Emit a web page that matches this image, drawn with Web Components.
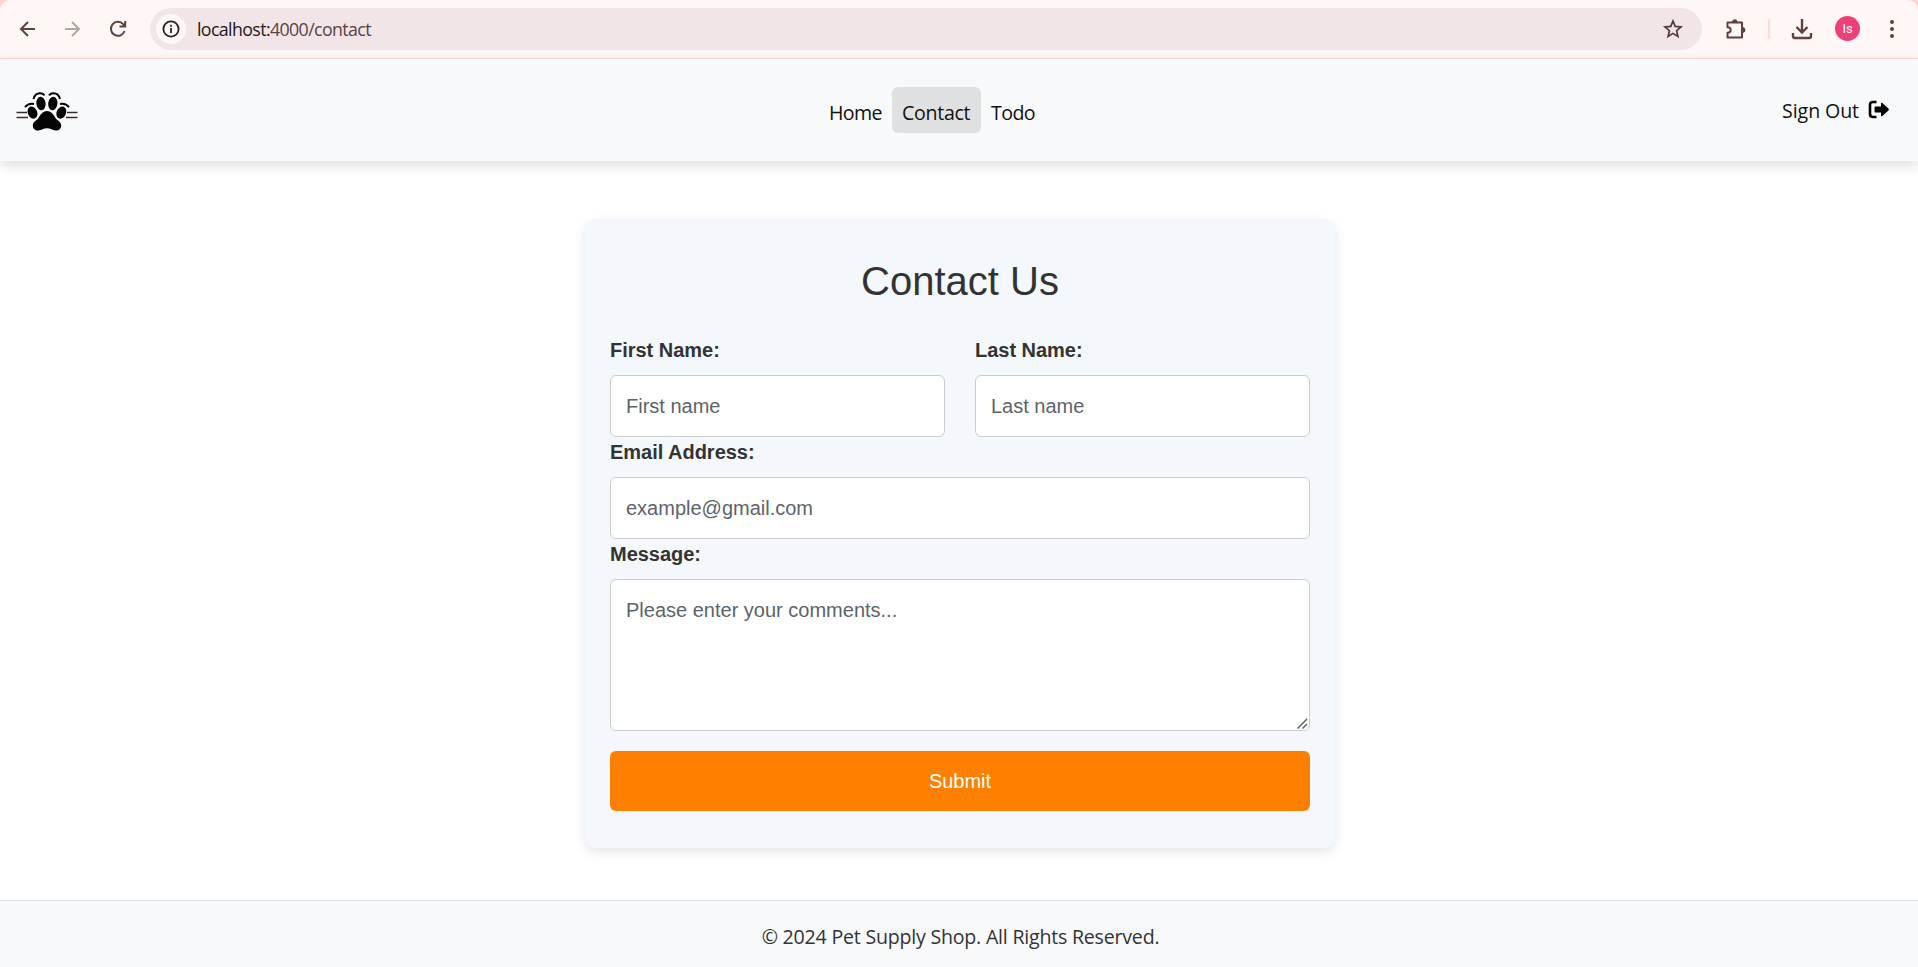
<!DOCTYPE html>
<html lang="en">
<head>
<meta charset="utf-8">
<title>Contact</title>
<style>
html,body{margin:0;height:100%;background:#fff;overflow:hidden}
body{font-family:"Liberation Sans",Arial,sans-serif}
</style>
</head>
<body>
<pet-app></pet-app>
<script>
const define = (name, html) => {
  const t = document.createElement('template');
  t.innerHTML = html;
  customElements.define(name, class extends HTMLElement {
    constructor() {
      super();
      this.attachShadow({ mode: 'open' }).append(t.content.cloneNode(true));
    }
  });
};

define('browser-bar', `
<style>
:host{display:block;height:59px;box-sizing:border-box;background:#ffd5cf}
.bar{height:59px;box-sizing:border-box;border-bottom:1px solid #f7dcd8;background:#fff7f6;border-radius:10px 10px 0 0;display:flex;align-items:center;padding:0 14px 1px 16px}
svg{display:block;flex:none}
.back{margin-right:20px}.fwd{margin-right:22px}
.re{margin-right:20px}
.url{flex:none;width:1552px;height:42px;border-radius:21px;background:#f1e5e7;display:flex;align-items:center;box-sizing:border-box;padding:0 18px 0 6px}
.info{width:30px;height:30px;border-radius:50%;background:#fff7f6;display:grid;place-items:center;flex:none}
.text{flex:1;margin-left:11px;font:17.8px/24px "Open Sans","Noto Sans",sans-serif;letter-spacing:-.62px;color:#5a4346;white-space:pre}
.text b{font-weight:400;color:#231a1b}
.ext{margin-left:21px}
.sep{width:2px;height:20px;background:#ffd9d4;margin:0 21px 0 21px;border-radius:1px;flex:none}
.av{width:25px;height:25px;border-radius:50%;background:#ee4078;color:#fff;font:13px/25px Roboto,sans-serif;text-align:center;margin:0 20px 0 22px;flex:none}
</style>
<div class="bar">
<svg class="back" width="24" height="24" viewBox="0 0 24 24" fill="none" stroke="#5f413e" stroke-width="2"><path d="M19 12H5.500M12 5l-7 7 7 7"/></svg>
<svg class="fwd" width="24" height="24" viewBox="0 0 24 24" fill="none" stroke="#b5a5a3" stroke-width="2"><path d="M5 12h13.500M12 5l7 7-7 7"/></svg>
<svg class="re" width="24" height="24" viewBox="0 0 24 24" fill="none" stroke="#5f413e" stroke-width="2"><path d="M18.600 14a7 7 0 1 1-1.400-6.800L19 9M19.200 4v5.500h-5.700"/></svg>
<div class="url">
<div class="info"><svg width="18" height="18" viewBox="0 0 18 18" fill="none" stroke="#2b2021" stroke-width="1.800"><circle cx="9" cy="9" r="7.600"/><path d="M9 8v5M9 4.800v1.900"/></svg></div>
<div class="text"><b>localhost:</b>4000/contact</div>
<svg width="22" height="22" viewBox="0 0 22 22" fill="none" stroke="#51393b" stroke-width="1.700"><path d="M11 3l2.200 5.400 5.800.5-4.400 3.800 1.300 5.700L11 15.400l-4.900 3 1.300-5.700L3 8.900l5.800-.5z"/></svg>
</div>
<svg class="ext" width="24" height="24" viewBox="0 0 24 24"><path d="M4.500 5.500H19v15H4.500v-4.800q3.200 0 3.200-2.700t-3.200-2.700z" fill="none" stroke="#5f413e" stroke-width="2" stroke-linejoin="round"/><path d="M9.500 5a2.300 2.300 0 0 1 4.600 0zM19.500 10.500v5a2.500 2.500 0 0 0 0-5z" fill="#5f413e" stroke="#5f413e"/></svg>
<div class="sep"></div>
<svg width="22" height="24" viewBox="0 0 22 24" fill="none" stroke="#5f413e" stroke-width="2.400"><path d="M11 2v13M5.500 10l5.500 5.500 5.500-5.500M2 16v3q0 2 2 2h14q2 0 2-2v-3"/></svg>
<div class="av">Is</div>
<svg width="24" height="24" viewBox="0 0 24 24" fill="#5f413e"><circle cx="12" cy="5" r="2"/><circle cx="12" cy="12" r="2"/><circle cx="12" cy="19" r="2"/></svg>
</div>`);

define('paw-logo', `
<style>:host{display:block;width:64px;height:42px}svg{display:block}</style>
<svg width="64" height="42" viewBox="0 0 64 42">
<g fill="#050304"><ellipse cx="26" cy="13.500" rx="4.600" ry="6.700" transform="rotate(-8 26 13.500)"/><ellipse cx="37.800" cy="13.500" rx="4.600" ry="6.700" transform="rotate(8 37.800 13.500)"/><ellipse cx="17.500" cy="22.600" rx="4.700" ry="6.300" transform="rotate(-24 17.500 22.600)"/><ellipse cx="46.300" cy="22.600" rx="4.700" ry="6.300" transform="rotate(24 46.300 22.600)"/>
<path d="M32 21c4.500 0 6.800 4 8.500 7 1.700 2.600 5.700 3.600 5.700 7.500 0 3.500-2.700 5.300-5.700 5-3-.3-5-2.300-8.500-2.300s-5.500 2-8.500 2.300c-3 .3-5.700-1.500-5.700-5 0-3.900 4-4.900 5.700-7.500 1.700-3 4-7 8.500-7z"/></g>
<g fill="none" stroke="#050304" stroke-width="2"><path d="M18.500 9q1.500-5.700 6.500-5.700 3 0 4.500 2M34 5.300q1.500-2 4.500-2 5 0 6.500 5.700M10 17.200q3.500-4.500 9-3.200M54 17.200q-3.500-4.500-9-3.200"/></g>
<path d="M1.500 22.500H12M1.500 27.500H13M62.500 22.500H52M62.500 27.500H51" stroke="#3a2c2e" stroke-width="1.600"/>
</svg>`);

define('nav-link', `
<style>
:host{display:block;box-sizing:border-box;height:46px;padding:0 10px;border-radius:6px;font:19.6px/52px "Open Sans","Noto Sans",sans-serif;letter-spacing:-.6px;color:#111;white-space:nowrap}
:host([active]){background:#dfe0e1;letter-spacing:-.3px}
</style><slot></slot>`);

define('site-nav', `
<style>
:host{display:grid;grid-template-columns:804px auto 1fr;height:102px;padding:0 29px 0 15px;box-sizing:border-box;background:#f8f9fb;box-shadow:0 4px 12px rgba(0,0,0,.14);position:relative}
paw-logo{margin:31px 0 0 -.5px}
nav{display:flex;margin-top:28px}
.h{width:73px}.c{width:89px}.t{width:63px}
.out{justify-self:end;display:flex;margin-top:38px;gap:9px;font:19.6px/28px "Open Sans","Noto Sans",sans-serif;letter-spacing:-.1px;color:#111}
svg{display:block;margin-top:3px}
</style>
<paw-logo></paw-logo>
<nav><nav-link class="h">Home</nav-link><nav-link class="c" active>Contact</nav-link><nav-link class="t">Todo</nav-link></nav>
<div class="out"><span>Sign Out</span><svg width="21" height="19" viewBox="0 0 21 19"><path d="M8.500 2H5Q2 2 2 5v9q0 3 3 3h3.500" fill="none" stroke="#000" stroke-width="2.600"/><path d="M7.500 6.500h5.500V3.600q0-1.600 1.300-.5l6.100 5.500q.9.900 0 1.800l-6.100 5.500q-1.300 1.100-1.300-.5v-2.900H7.500q-1 0-1-1v-4q0-1 1-1z"/></svg></div>`);

define('form-field', `
<style>
:host{display:block}
.l{font:bold 20px/30px "Liberation Sans",Arial,sans-serif;letter-spacing:-.02px;color:#333;display:block;margin-bottom:10px}
.box{position:relative}
::slotted(input),::slotted(textarea){display:block;box-sizing:border-box;width:100%;margin:0;border:1px solid #ccc;border-radius:6px;background:#fff;padding:15px;font:20px/30px "Liberation Sans",Arial,sans-serif;outline:0}
::slotted(input){height:62px}
::slotted(textarea){height:152px;resize:none}
.grip{display:none;position:absolute;right:2px;bottom:2px}
:host([multiline]) .grip{display:block}
</style>
<div class="l"><slot name="label"></slot></div><div class="box"><slot></slot><svg class="grip" width="11" height="11" viewBox="0 0 11 11" stroke="#555" stroke-width="1.400"><path d="M.5 10.500l9.500-9.500M5.500 10.500l4.500-4.500"/></svg></div>`);

define('contact-form', `
<style>
:host{display:block;box-sizing:border-box;width:750px;height:629px;margin:0 0 0 585px;padding:38px 25px 37px;border-radius:12px;background:#f4f7fc;box-shadow:0 4px 12px rgba(0,0,0,.1);color:#333}
h1{margin:0 0 30px;font:400 40px/48px "Liberation Sans",Arial,sans-serif;text-align:center;color:#333}
.row{display:grid;grid-template-columns:1fr 1fr;gap:30px}
form{margin:0}
input::placeholder,textarea::placeholder{color:#5c636a;opacity:1}
button{display:block;width:100%;height:60px;margin-top:20px;border:0;border-radius:6px;background:#ff8000;color:#fff;font:20px/30px "Liberation Sans",Arial,sans-serif;padding:0}
</style>
<h1>Contact Us</h1>
<form>
<div class="row">
<form-field><span slot="label">First Name:</span><input placeholder="First name"></form-field>
<form-field><span slot="label">Last Name:</span><input placeholder="Last name"></form-field>
</div>
<form-field><span slot="label">Email Address:</span><input type="email" placeholder="example@gmail.com"></form-field>
<form-field multiline><span slot="label">Message:</span><textarea placeholder="Please enter your comments..."></textarea></form-field>
<button type="button">Submit</button>
</form>`);

define('site-footer', `
<style>
:host{display:block;box-sizing:border-box;height:67px;border-top:1px solid #dcdee0;background:#f8f9fb;text-align:center;font:19.6px/72px "Open Sans","Noto Sans",sans-serif;letter-spacing:-.22px;color:#333;padding-left:3px}
</style>© 2024 Pet Supply Shop. All Rights Reserved.`);

define('pet-app', `
<style>
:host{display:flex;flex-direction:column;height:967px;width:100%}
main{flex:1;padding-top:58px}
</style>
<browser-bar></browser-bar>
<site-nav></site-nav>
<main><contact-form></contact-form></main>
<site-footer></site-footer>`);
</script>
</body>
</html>
